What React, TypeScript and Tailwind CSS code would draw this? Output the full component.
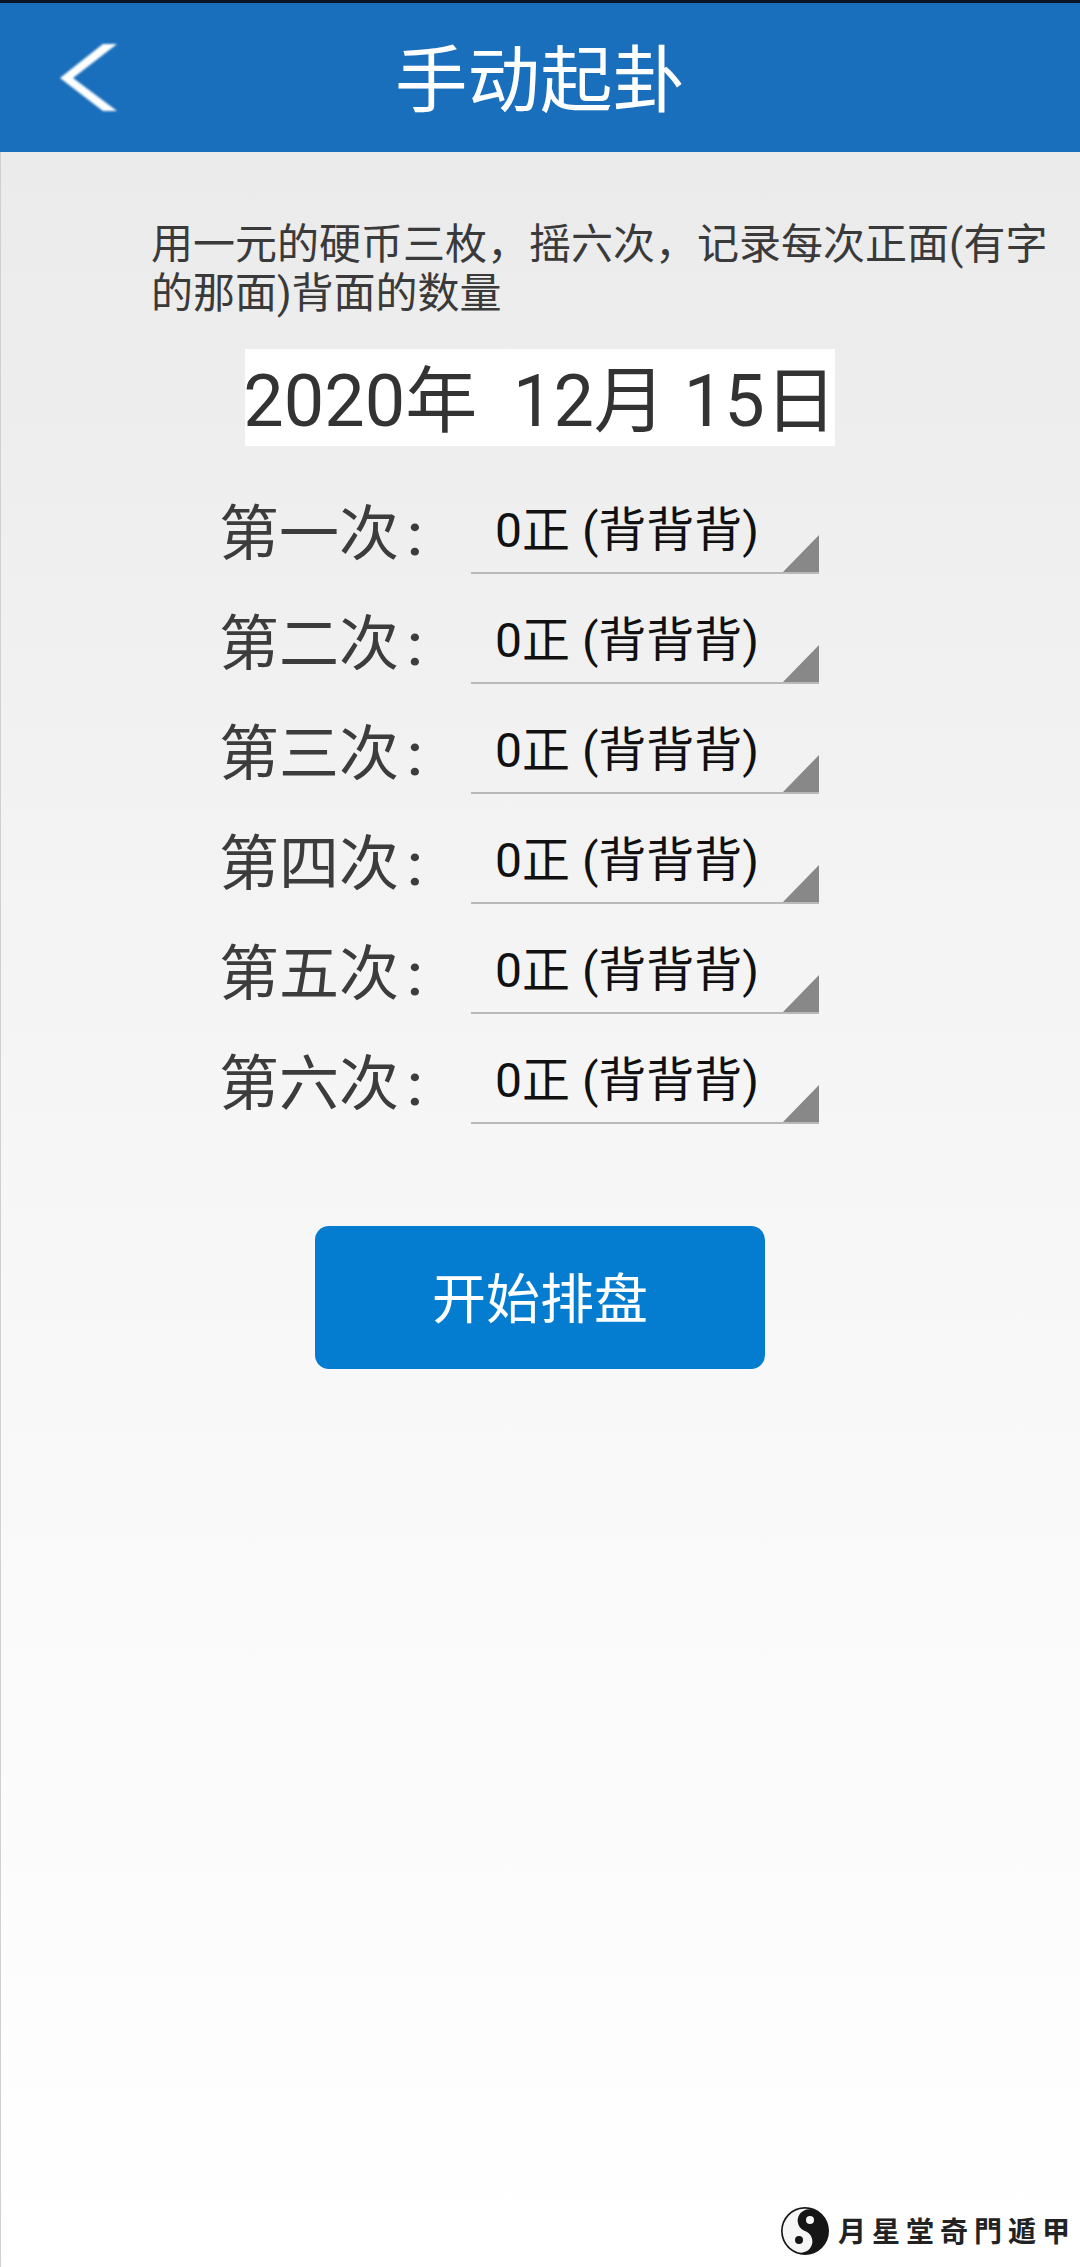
const cjk = "font-['Roboto','Noto_Sans_CJK_SC',sans-serif]";

const rounds = ['第一次', '第二次', '第三次', '第四次', '第五次', '第六次'];

function BackIcon() {
  return (
    <svg width="66" height="76" viewBox="0 0 66 76" className="blur-[1px]">
      <polygon points="47,4 61,4 17,38 61,71 47,71 4,38" fill="#fff" />
    </svg>
  );
}

function TaiChi() {
  return (
    <svg width="50" height="50" viewBox="0 0 50 50" className="blur-[0.6px] shrink-0">
      <circle cx="25" cy="25" r="24" fill="#161616" />
      <path
        d="M25 1 A24 24 0 0 0 25 49 A12 12 0 0 0 25 25 A12 12 0 0 1 25 1 Z"
        fill="#f6f6f6"
        transform="rotate(20 25 25) translate(25 25) scale(0.93) translate(-25 -25)"
      />
      <circle cx="30" cy="14" r="4" fill="#f6f6f6" />
      <circle cx="19" cy="34" r="4" fill="#161616" />
    </svg>
  );
}

function RoundRow({ label }: { label: string }) {
  return (
    <div className="flex items-end h-[110px]">
      <div className="w-[252px] text-[60px] leading-[78px] text-[#3c3c3c] whitespace-nowrap">
        {label}
        <span className="ml-[8px] font-medium">:</span>
      </div>
      <div className="relative w-[348px] h-[84px] border-b-2 border-[#b9b9b9] pl-[24px] text-[48px] leading-[82px] text-[#111] whitespace-nowrap">
        0正 (背背背)
        <svg width="36" height="37" viewBox="0 0 36 37" className="absolute right-0 bottom-0">
          <path d="M36 0 V37 H0 Z" fill="#888" />
        </svg>
      </div>
    </div>
  );
}

export default function App() {
  return (
    <div className={`${cjk} relative min-h-[2267px] w-full overflow-hidden bg-gradient-to-b from-[#e9e9e9] via-[#f6f6f6] to-white shadow-[inset_1px_0_0_#d0d0d0]`}>
      <header className="relative flex h-[152px] items-center justify-center border-t-[3px] border-[#0a1626] bg-[#1a6fbc] pt-[9px]">
        <div className="absolute left-[56px] top-[37px]">
          <BackIcon />
        </div>
        <h1 className="text-[72.5px] leading-none text-white">手动起卦</h1>
      </header>

      <p className="mt-[68px] ml-[151px] mr-[30px] text-[42px] leading-[49px] text-[#3a3a3a]">
        用一元的硬币三枚，摇六次，记录每次正面(有字的那面)背面的数量
      </p>

      <div className="mt-[31px] flex justify-center">
        <div className="flex h-[97px] w-[590px] items-center justify-center bg-white pt-[8px] text-[72px] leading-none text-[#333] whitespace-pre">
          2020年  12月 15日
        </div>
      </div>

      <div className="mt-[18px] ml-[219px] flex flex-col">
        {rounds.map((r) => (
          <RoundRow key={r} label={r} />
        ))}
      </div>

      <div className="mt-[102px] flex justify-center">
        <button className="flex h-[143px] w-[450px] items-center justify-center rounded-[14px] bg-[#047ccf] pt-[6px] text-[54px] leading-none text-white">
          开始排盘
        </button>
      </div>

      <div className="absolute right-[4px] bottom-[11px] flex items-center gap-[8px]">
        <TaiChi />
        <span className="pt-[3px] text-[28px] font-bold leading-none tracking-[6px] text-[#222] whitespace-nowrap">月星堂奇門遁甲</span>
      </div>
    </div>
  );
}
